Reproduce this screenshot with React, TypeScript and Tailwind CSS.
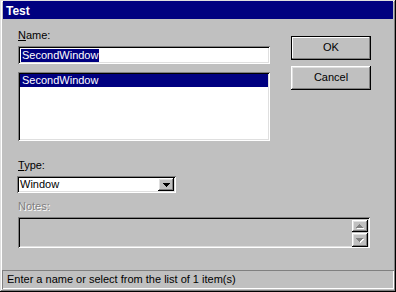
import React from "react";

const sunken =
  "shadow-[inset_1px_1px_#808080,inset_-1px_-1px_#ffffff,inset_2px_2px_#000000,inset_-2px_-2px_#dfdfdf]";
const raised =
  "shadow-[inset_-1px_-1px_#000000,inset_1px_1px_#ffffff,inset_-2px_-2px_#808080,inset_2px_2px_#dfdfdf]";

function DownArrow({ color = "#000" }: { color?: string }) {
  return (
    <svg width="7" height="4" viewBox="0 0 7 4" className="block">
      <path d="M0 0h7v1H0zM1 1h5v1H1zM2 2h3v1H2zM3 3h1v1H3z" fill={color} />
    </svg>
  );
}

function DisabledArrow({ up }: { up?: boolean }) {
  const d = up
    ? "M3 0h1v1H3zM2 1h3v1H2zM1 2h5v1H1zM0 3h7v1H0z"
    : "M0 0h7v1H0zM1 1h5v1H1zM2 2h3v1H2zM3 3h1v1H3z";
  return (
    <svg width="8" height="5" viewBox="0 0 8 5" className="block">
      <path d={d} fill="#ffffff" transform="translate(1,1)" />
      <path d={d} fill="#808080" />
    </svg>
  );
}

export default function App() {
  return (
    <div
      className="w-[396px] h-[292px] bg-[#c0c0c0] flex flex-col px-[2px] pt-[1px] pb-[2px] text-[11px] leading-[13px] text-black shadow-[inset_-1px_-1px_#000000,inset_1px_1px_#dfdfdf,inset_-2px_-2px_#808080,inset_2px_2px_#ffffff]"
      style={{ fontFamily: '"Liberation Sans", Arial, sans-serif' }}
    >
      {/* Title bar */}
      <div className="mx-px h-[18px] bg-[#000080] text-white font-bold text-[12px] leading-[14px] pl-[3px] pt-[3px]">
        Test
      </div>

      {/* Body */}
      <div className="pl-[16px] flex flex-col">
        <div className="flex">
          <div className="w-[252px] flex flex-col">
            <div className="mt-[10px]">
              <span className="underline underline-offset-[1px]">N</span>ame:
            </div>
            <div className={`mt-[4px] h-[18px] bg-white ${sunken} flex items-center pl-[3px]`}>
              <span className="bg-[#000080] text-white h-[13px] leading-[13px] px-px">
                SecondWindow
              </span>
            </div>
            <div className={`mt-[8px] h-[69px] bg-white ${sunken} p-[2px]`}>
              <div className="h-[13px] bg-[#000080] text-white leading-[13px] pl-[2px]">
                SecondWindow
              </div>
            </div>
          </div>
          <div className="ml-[21px] mt-[17px] flex flex-col gap-[6px]">
            <button className="w-[80px] h-[24px] border border-black bg-[#c0c0c0] shadow-[inset_-1px_-1px_#808080,inset_1px_1px_#ffffff] flex items-center justify-center pb-px">
              OK
            </button>
            <button className={`w-[80px] h-[24px] bg-[#c0c0c0] ${raised} flex items-center justify-center pb-px`}>
              Cancel
            </button>
          </div>
        </div>

        <div className="mt-[18px]">
          <span className="underline underline-offset-[1px]">T</span>ype:
        </div>
        <div className={`mt-[4px] -ml-px w-[159px] h-[17px] bg-white ${sunken} flex items-center justify-between pl-[3px] pr-[2px]`}>
          <span>Window</span>
          <div className={`w-[16px] h-[13px] bg-[#c0c0c0] ${raised} flex items-center justify-center`}>
            <DownArrow />
          </div>
        </div>

        <div className="mt-[7px] text-[#808080] [text-shadow:1px_1px_0_#ffffff]">Notes:</div>
        <div className={`mt-[4px] w-[352px] h-[31px] bg-[#c0c0c0] ${sunken} flex justify-end items-start pt-[3px] pr-[2px]`}>
          <div className="flex flex-col gap-px">
            <div className={`w-[16px] h-[12px] ${raised} flex items-center justify-center`}>
              <DisabledArrow up />
            </div>
            <div className={`w-[16px] h-[14px] ${raised} flex items-center justify-center`}>
              <DisabledArrow />
            </div>
          </div>
        </div>
      </div>

      {/* Status bar */}
      <div className="mt-auto mb-[1px] h-[19px] shadow-[inset_1px_1px_#808080,inset_-1px_-1px_#ffffff] flex items-center pl-[5px]">
        Enter a name or select from the list of 1 item(s)
      </div>
    </div>
  );
}
